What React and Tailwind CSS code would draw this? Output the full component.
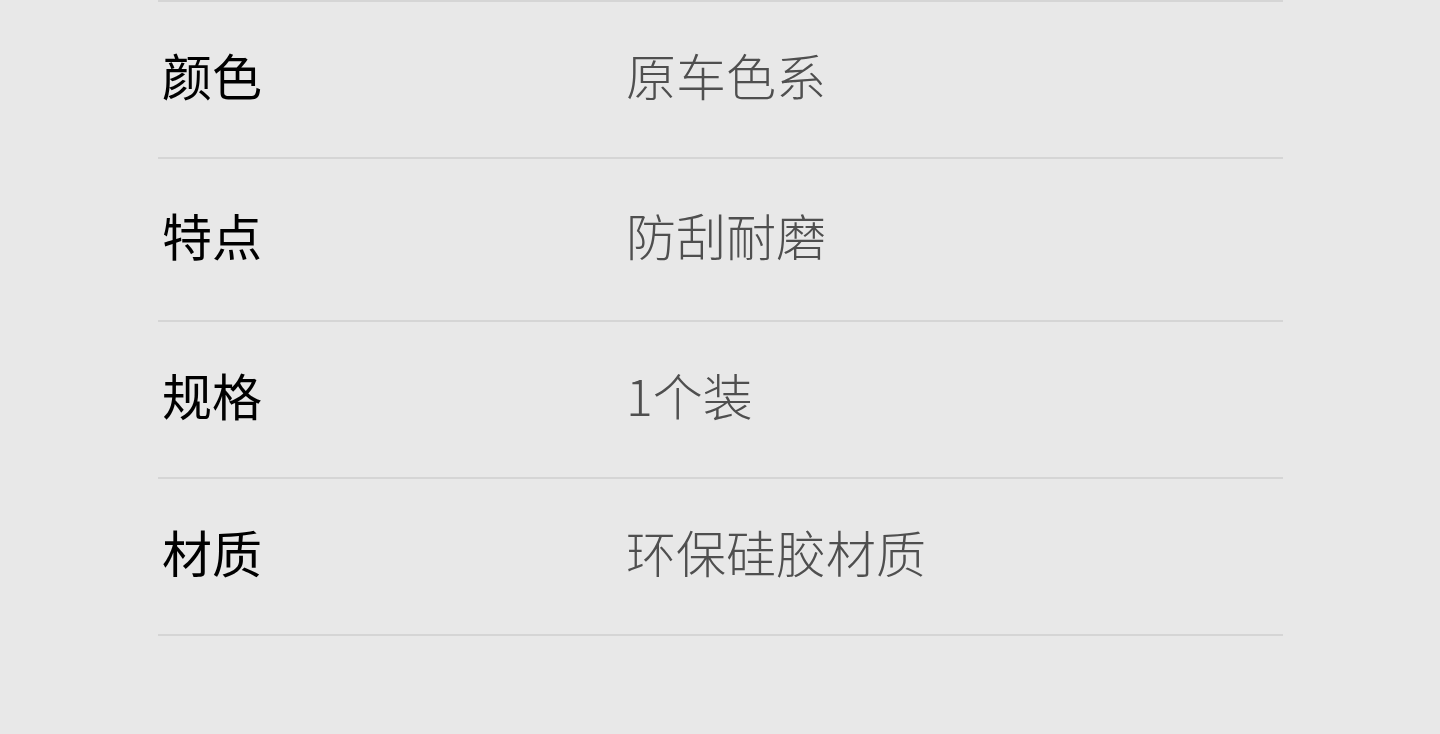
import React from 'react';

const specs = [
    { label: '颜色', value: '原车色系', h: 'h-[157px]' },
    { label: '特点', value: '防刮耐磨', h: 'h-[163px]' },
    { label: '规格', value: '1个装', h: 'h-[157px]' },
    { label: '材质', value: '环保硅胶材质', h: 'h-[157px]' },
];

const App = () => {
    return (
        <div className="min-h-screen h-[734px] bg-[#e8e8e8] font-['Noto_Sans_CJK_SC','Noto_Sans',sans-serif] overflow-hidden">
            <div className="ml-[158px] w-[1125px] border-t-2 border-[#d5d5d5]">
                {specs.map((row) => (
                    <div
                        key={row.label}
                        className={`flex items-center pb-[12px] ${row.h} border-b-2 border-[#d5d5d5]`}
                    >
                        <div className="w-[468px] pl-[4px] text-[50px] leading-none text-black">
                            {row.label}
                        </div>
                        <div className="text-[50px] leading-none font-light text-[#4f4f4f]">
                            {row.value}
                        </div>
                    </div>
                ))}
            </div>
        </div>
    );
};

export default App;
